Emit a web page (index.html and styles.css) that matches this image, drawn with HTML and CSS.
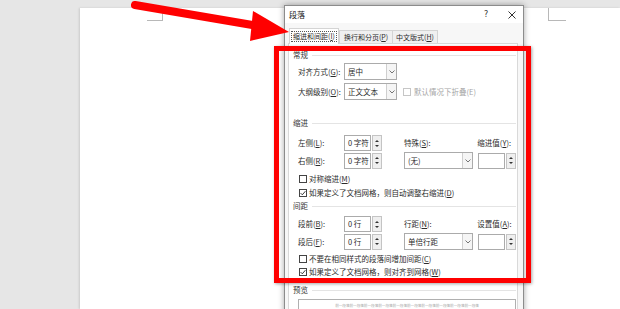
FILE: index.html
```html
<!DOCTYPE html>
<html lang="zh-CN">
<head>
<meta charset="utf-8">
<title>段落</title>
<link rel="stylesheet" href="styles.css">
</head>
<body>
<div class="page">
  <span class="crop crop-l"></span>
  <span class="crop crop-r"></span>
</div>

<div class="dialog">
  <div class="titlebar">
    <span class="title">段落</span>
    <span class="help">?</span>
    <span class="close"><svg width="8" height="8" viewBox="0 0 8 8"><path d="M0.5 0.5L7.5 7.5M7.5 0.5L0.5 7.5" stroke="#333" stroke-width="1"/></svg></span>
  </div>
  <div class="tabs">
    <div class="tab active"><span class="focus">缩进和间距(<u>I</u>)</span></div>
    <div class="tab t2">换行和分页(<u>P</u>)</div>
    <div class="tab t3">中文版式(<u>H</u>)</div>
  </div>
  <div class="panel">
    <div class="group g1"><span>常规</span></div>
    <div class="row r-align">
      <span class="lbl">对齐方式(<u>G</u>):</span>
      <div class="select w53"><span class="val">居中</span><span class="arrow"><svg width="6" height="4" viewBox="0 0 6 4"><path d="M0.5 0.5L3 3L5.5 0.5" fill="none" stroke="#666" stroke-width="0.9"/></svg></span></div>
    </div>
    <div class="row r-level">
      <span class="lbl">大纲级别(<u>O</u>):</span>
      <div class="select w53"><span class="val">正文文本</span><span class="arrow"><svg width="6" height="4" viewBox="0 0 6 4"><path d="M0.5 0.5L3 3L5.5 0.5" fill="none" stroke="#666" stroke-width="0.9"/></svg></span></div>
      <span class="cb disabled"></span>
      <span class="dis-text">默认情况下折叠(E)</span>
    </div>

    <div class="group g2"><span>缩进</span></div>
    <div class="row r-left">
      <span class="lbl">左侧(<u>L</u>):</span>
      <div class="spin"><span class="val">0 字符</span><span class="btns"><span class="up"></span><span class="down"></span></span></div>
      <span class="rlbl">特殊(<u>S</u>):</span>
      <span class="rlbl2">缩进值(<u>Y</u>):</span>
    </div>
    <div class="row r-right">
      <span class="lbl">右侧(<u>R</u>):</span>
      <div class="spin"><span class="val">0 字符</span><span class="btns"><span class="up"></span><span class="down"></span></span></div>
      <div class="select w69 rsel"><span class="val">(无)</span><span class="arrow"><svg width="6" height="4" viewBox="0 0 6 4"><path d="M0.5 0.5L3 3L5.5 0.5" fill="none" stroke="#666" stroke-width="0.9"/></svg></span></div>
      <div class="spin rspin"><span class="val"></span><span class="btns"><span class="up"></span><span class="down"></span></span></div>
    </div>
    <div class="row chk c1">
      <span class="cb"></span><span>对称缩进(<u>M</u>)</span>
    </div>
    <div class="row chk c2">
      <span class="cb checked"><svg width="6" height="6" viewBox="0 0 6 6"><path d="M0.6 3.1L2.3 4.8L5.4 1.2" fill="none" stroke="#222" stroke-width="0.9"/></svg></span><span>如果定义了文档网格，则自动调整右缩进(<u>D</u>)</span>
    </div>

    <div class="group g3"><span>间距</span></div>
    <div class="row r-before">
      <span class="lbl">段前(<u>B</u>):</span>
      <div class="spin"><span class="val">0 行</span><span class="btns"><span class="up"></span><span class="down"></span></span></div>
      <span class="rlbl">行距(<u>N</u>):</span>
      <span class="rlbl2">设置值(<u>A</u>):</span>
    </div>
    <div class="row r-after">
      <span class="lbl">段后(<u>F</u>):</span>
      <div class="spin"><span class="val">0 行</span><span class="btns"><span class="up"></span><span class="down"></span></span></div>
      <div class="select w69 rsel"><span class="val">单倍行距</span><span class="arrow"><svg width="6" height="4" viewBox="0 0 6 4"><path d="M0.5 0.5L3 3L5.5 0.5" fill="none" stroke="#666" stroke-width="0.9"/></svg></span></div>
      <div class="spin rspin"><span class="val"></span><span class="btns"><span class="up"></span><span class="down"></span></span></div>
    </div>
    <div class="row chk c3">
      <span class="cb"></span><span>不要在相同样式的段落间增加间距(<u>C</u>)</span>
    </div>
    <div class="row chk c4">
      <span class="cb checked"><svg width="6" height="6" viewBox="0 0 6 6"><path d="M0.6 3.1L2.3 4.8L5.4 1.2" fill="none" stroke="#222" stroke-width="0.9"/></svg></span><span>如果定义了文档网格，则对齐到网格(<u>W</u>)</span>
    </div>

    <div class="group g4"><span>预览</span></div>
    <div class="preview">
      <p class="pv-line">前一段落前一段落前一段落前一段落前一段落前一段落前一段落前一段落前一段落前一段落</p>
    </div>
  </div>
</div>

<div class="highlight"></div>

<svg class="arrow-overlay" width="620" height="309" viewBox="0 0 620 309">
  <line x1="135" y1="5" x2="258" y2="26" stroke="#ff0000" stroke-width="8" stroke-linecap="round"/>
  <polygon points="253,11 289,32 250,41" fill="#ff0000"/>
</svg>
</body>
</html>
```

FILE: styles.css
```css
* { box-sizing: border-box; margin: 0; padding: 0; }

html { overflow: hidden; }

body {
  width: 620px;
  height: 309px;
  overflow: hidden;
  position: relative;
  background: #e6e6e6;
  font-family: "Noto Sans CJK SC", "Noto Sans", sans-serif;
  font-size: 7.5px;
  line-height: 1;
  color: #2b2b2b;
  padding-top: 8px;
}

u { text-decoration: underline; text-underline-offset: 1px; }

/* document page */
.page {
  position: relative;
  margin-left: 80px;
  height: 301px;
  background: #fff;
  box-shadow: -1px 0 2px rgba(0, 0, 0, 0.12);
}

.crop { position: absolute; top: 0; height: 13px; }
.crop-l { left: 67px; width: 16px; border-right: 1px solid #b8b8b8; border-bottom: 1px solid #b8b8b8; }
.crop-r { left: 468px; width: 18px; border-left: 1px solid #b8b8b8; border-bottom: 1px solid #b8b8b8; }

/* dialog window */
.dialog {
  position: absolute;
  left: 284px;
  top: 5px;
  width: 240px;
  height: 360px;
  background: #f7f7f7;
  border: 1px solid #8c8c8c;
  box-shadow: 0 0 6px rgba(0, 0, 0, 0.35);
  display: flex;
  flex-direction: column;
}
.dialog > * { flex-shrink: 0; }

.titlebar {
  height: 17px;
  display: flex;
  align-items: center;
  padding-left: 4px;
  background: #fff;
}
.title { flex: 1; font-size: 8px; color: #222; }
.help { width: 20px; text-align: center; font-size: 8px; font-family: "DejaVu Sans", sans-serif; color: #333; }
.close { width: 22px; margin-left: 5px; display: flex; justify-content: center; align-items: center; }

.tabs {
  margin-top: 5px;
  height: 15px;
  padding-left: 4px;
  display: flex;
  align-items: flex-end;
  white-space: nowrap;
}
.tab {
  height: 13px;
  border: 1px solid #d4d4d4;
  border-bottom: none;
  background: #f0f0f0;
  display: flex;
  align-items: center;
  justify-content: center;
  color: #2b2b2b;
  font-size: 7px;
}
.tab.active {
  width: 50px;
  height: 16px;
  margin-bottom: -1px;
  background: #fff;
  position: relative;
  z-index: 1;
}
.focus {
  border: 1px dotted #555;
  width: 46px;
  height: 11px;
  display: flex;
  align-items: center;
  justify-content: center;
}
.t2 { width: 54px; }
.t3 { width: 45px; border-left: none; }

.panel {
  margin: 0 5px 0 3px;
  flex: 1;
  background: #fff;
  border: 1px solid #d9d9d9;
  display: flex;
  flex-direction: column;
}
.panel > * { flex-shrink: 0; }

.group {
  height: 10px;
  display: flex;
  align-items: center;
  padding-left: 4px;
  margin-right: 1px;
  color: #333;
}
.group::after {
  content: "";
  flex: 1;
  margin-left: 4px;
  border-top: 1px solid #e4e4e4;
}
.g1 { margin-top: 6px; }
.g2 { margin-top: 18px; }
.g3 { margin-top: 3px; }
.g4 { margin-top: 8px; }

.row {
  display: flex;
  align-items: center;
  padding-left: 9px;
  white-space: nowrap;
}
.lbl { width: 46px; flex-shrink: 0; }

.r-align { margin-top: 3px; height: 17px; }
.r-level { margin-top: 3px; height: 17px; }
.r-left { margin-top: 7px; height: 16px; }
.r-right { margin-top: 1px; height: 17px; }
.r-before { margin-top: 5px; height: 16px; }
.r-after { margin-top: 1px; height: 17px; }

.select {
  height: 17px;
  border: 1px solid #ababab;
  background: #fff;
  display: flex;
  flex-shrink: 0;
}
.select .val { flex: 1; display: flex; align-items: center; padding-left: 3px; }
.select .arrow {
  width: 10px;
  border-left: 1px solid #cfcfcf;
  background: #f5f5f5;
  display: flex;
  align-items: center;
  justify-content: center;
}
.w53 { width: 53px; }
.w69 { width: 69px; }
.rsel { margin-left: 22px; }

.spin {
  width: 38px;
  height: 16px;
  display: flex;
  flex-shrink: 0;
}
.spin .val {
  flex: 1;
  border: 1px solid #ababab;
  background: #fff;
  display: flex;
  align-items: center;
  padding-left: 3px;
}
.spin .btns {
  width: 10px;
  margin-left: 1px;
  border: 1px solid #c4c4c4;
  background: #efefef;
  display: flex;
  flex-direction: column;
  align-items: center;
  justify-content: space-around;
  padding: 2px 0;
}
.up, .down { width: 0; height: 0; border-left: 2px solid transparent; border-right: 2px solid transparent; }
.up { border-bottom: 2px solid #333; }
.down { border-top: 2px solid #333; }
.rspin { margin-left: 5px; }

.rlbl { margin-left: 22px; width: 74px; }
.rlbl2 { width: 40px; }

.cb {
  width: 8px;
  height: 8px;
  border: 1px solid #444;
  background: #fff;
  margin-right: 2px;
  display: flex;
  align-items: center;
  justify-content: center;
  flex-shrink: 0;
}
.cb.disabled { border-color: #c6c6c6; margin-left: 6px; margin-right: 3px; }
.dis-text { color: #a6a6a6; }

.chk { height: 10px; padding-left: 10px; }
.c1 { margin-top: 5px; }
.c2 { margin-top: 4px; }
.c3 { margin-top: 4px; }
.c4 { margin-top: 3px; }

.preview {
  margin: 4px 1px 0 9px;
  height: 40px;
  border: 1px solid #b0b0b0;
  background: #fff;
}
.pv-line {
  margin-top: 4px;
  text-align: center;
  font-size: 3.6px;
  line-height: 4px;
  color: #a8a8a8;
  white-space: nowrap;
}

/* annotation overlays */
.highlight {
  position: absolute;
  left: 274px;
  top: 46px;
  width: 257px;
  height: 237px;
  border: 5px solid #ff0000;
  box-shadow: 1px 1px 3px rgba(0, 0, 0, 0.35);
}

.arrow-overlay {
  position: absolute;
  left: 0;
  top: 0;
  pointer-events: none;
}
```
